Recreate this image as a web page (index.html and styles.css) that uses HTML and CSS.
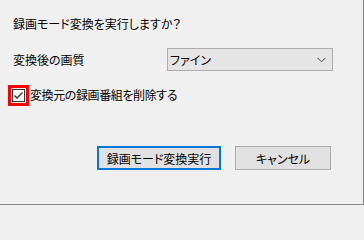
FILE: index.html
```html
<!DOCTYPE html>
<html lang="ja">
<head>
<meta charset="utf-8">
<link rel="stylesheet" href="styles.css">
</head>
<body>
<div class="dialog">
  <div class="title">録画モード変換を実行しますか？</div>
  <div class="row">
    <div class="label">変換後の画質</div>
    <div class="select">
      <span class="select-text">ファイン</span>
      <svg class="chev" width="9" height="6" viewBox="0 0 9 6"><polyline points="0.5,0.8 4.5,4.8 8.5,0.8" fill="none" stroke="#444" stroke-width="1"/></svg>
    </div>
  </div>
  <div class="checkrow">
    <span class="checkbox">
      <svg width="11" height="11" viewBox="0 0 11 11"><polyline points="1.5,5.5 4,8 9.5,2.5" fill="none" stroke="#333" stroke-width="1.4"/></svg>
    </span>
    <span class="checklabel">変換元の録画番組を削除する</span>
  </div>
  <div class="buttons">
    <div class="btn primary">録画モード変換実行</div>
    <div class="btn cancel">キャンセル</div>
  </div>
</div>
</body>
</html>
```
FILE: styles.css
```css
html, body {
  margin: 0;
  padding: 0;
}
body {
  width: 363px;
  height: 204px;
  background: #f0f0f0;
  border-right: 1px solid #888;
  border-bottom: 1px solid #888;
  font-family: "Noto Sans CJK JP", "Noto Sans", sans-serif;
  font-size: 12px;
  color: #000;
  font-feature-settings: "palt";
  overflow: hidden;
}
.dialog {
  display: flex;
  flex-direction: column;
  padding: 16px 0 0 13px;
}
.title {
  height: 16px;
  line-height: 16px;
}
.row {
  display: flex;
  align-items: center;
  height: 23px;
  margin-top: 16px;
}
.label {
  width: 154px;
  line-height: 16px;
}
.select {
  box-sizing: border-box;
  width: 166px;
  height: 23px;
  background: #e5e5e5;
  border: 1px solid #adadad;
  display: flex;
  align-items: center;
  justify-content: space-between;
  padding: 0 6px 0 2px;
}
.chev {
  display: block;
}
.checkrow {
  display: flex;
  align-items: center;
  height: 20px;
  margin-top: 14px;
  margin-left: -1px;
}
.checkbox {
  box-sizing: border-box;
  width: 13px;
  height: 13px;
  border: 1px solid #333;
  background: #fff;
  outline: 3px solid #ff0000;
  outline-offset: 1px;
  display: flex;
  align-items: center;
  justify-content: center;
}
.checkbox svg {
  display: block;
}
.checklabel {
  margin-left: 5px;
  line-height: 16px;
  letter-spacing: -0.4px;
}
.buttons {
  display: flex;
  margin-top: 41px;
  padding-left: 84px;
  gap: 14px;
}
.btn {
  box-sizing: border-box;
  height: 24px;
  background: #e1e1e1;
  display: flex;
  align-items: center;
  justify-content: center;
}
.primary {
  width: 124px;
  border: 2px solid #0078d7;
}
.cancel {
  width: 96px;
  border: 1px solid #adadad;
}
```
